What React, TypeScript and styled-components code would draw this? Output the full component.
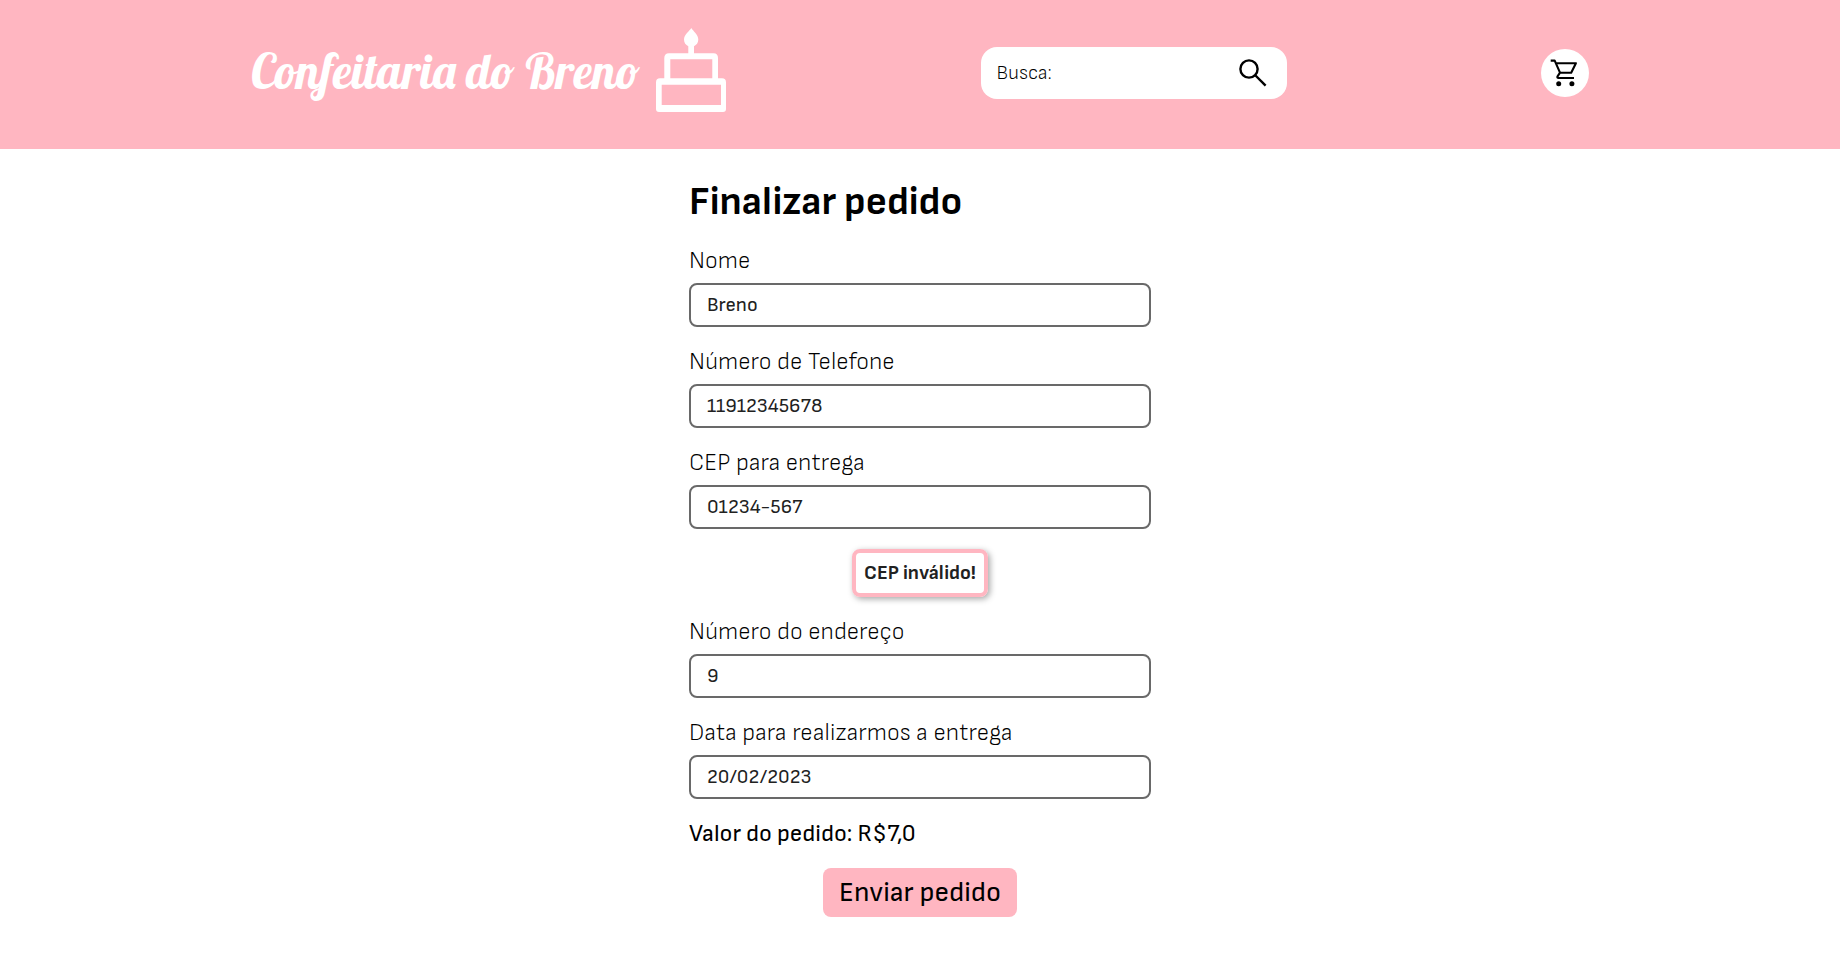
import React, { useState } from "react";
import styled, { createGlobalStyle } from "styled-components";

const pink = "#ffb6c1";

const GlobalStyle = createGlobalStyle`
  *, *::before, *::after { box-sizing: border-box; }
  body {
    margin: 0;
    background: #fff;
    color: #000;
    font-family: "Sofia Sans", Roboto, "Liberation Sans", sans-serif;
  }
  input, button { font-family: inherit; }
`;

const Header = styled.header`
  display: flex;
  flex-wrap: wrap;
  align-items: center;
  justify-content: space-evenly;
  gap: 16px 3px;
  padding: 28px 0 31px;
  background: ${pink};
`;

const Logo = styled.a`
  display: flex;
  align-items: flex-start;
  justify-content: space-between;
  width: 475px;
  max-width: 100%;
  height: 90px;
  color: #fff;
  text-decoration: none;
`;

const LogoText = styled.span`
  font-family: Lobster, "Liberation Serif", serif;
  font-size: 48px;
  font-weight: 400;
  line-height: 86px;
  white-space: nowrap;
`;

const Search = styled.form`
  display: flex;
  align-items: center;
  width: 306px;
  height: 52px;
  padding: 0 16px;
  border-radius: 16px;
  background: #fff;
`;

const SearchInput = styled.input`
  flex: 1;
  min-width: 0;
  padding: 0;
  border: 0;
  outline: 0;
  background: transparent;
  font-size: 20px;
  font-weight: 300;
  &::placeholder { color: #000; opacity: 1; }
`;

const IconButton = styled.button`
  display: flex;
  align-items: center;
  justify-content: center;
  width: 36px;
  height: 36px;
  padding: 0;
  border: 0;
  background: transparent;
  cursor: pointer;
`;

const CartButton = styled(IconButton)`
  width: 48px;
  height: 48px;
  border-radius: 50%;
  background: #fff;
`;

const OrderForm = styled.form`
  display: flex;
  flex-direction: column;
  gap: 20px;
  width: 462px;
  max-width: 100%;
  margin: 0 auto;
  padding: 29px 0 48px;
`;

const Title = styled.h1`
  margin: 0;
  font-size: 40px;
  font-weight: 700;
  line-height: 48px;
`;

const Field = styled.div`
  display: flex;
  flex-direction: column;
  gap: 8px;
`;

const Label = styled.label`
  font-size: 24px;
  font-weight: 300;
  line-height: 29px;
`;

const TextInput = styled.input`
  width: 100%;
  height: 44px;
  padding: 0 16px;
  border: 2px solid #696969;
  border-radius: 8px;
  background: #fff;
  color: #212121;
  font-size: 20px;
  font-weight: 400;
`;

const Alert = styled.p`
  align-self: center;
  margin: 0;
  padding: 0 8px;
  border: 4px solid ${pink};
  border-radius: 8px;
  box-shadow: 2px 2px 6px rgba(0, 0, 0, 0.35);
  color: #212121;
  font-size: 20px;
  font-weight: 700;
  line-height: 40px;
`;

const Total = styled.p`
  margin: 0;
  font-size: 24px;
  font-weight: 400;
  line-height: 29px;
`;

const Submit = styled.button`
  align-self: center;
  height: 49px;
  padding: 0 16px;
  border: 0;
  border-radius: 8px;
  background: ${pink};
  color: #000;
  font-size: 28px;
  font-weight: 400;
  cursor: pointer;
`;

const CakeIcon = () => (
  <svg width="70" height="84" viewBox="0 0 70 84" fill="#fff" aria-hidden="true">
    <path d="M35.3 0C37 3 42.3 6.5 42.3 11.5C42.3 14.8 40.5 17 38 18.2V26H32.3V18.2C29.8 17 28 14.8 28 11.5C28 6.5 33.6 3 35.3 0Z" />
    <path
      fillRule="evenodd"
      d="M13 25.3H57.5Q62 25.3 62 30V50.3H66Q70 50.3 70 54.5V81Q70 84 67 84H3Q0 84 0 81V54.5Q0 50.3 4 50.3H8.3V30Q8.3 25.3 13 25.3ZM14.3 31.3V50.3H56.3V31.3ZM5.7 56.7V77H65V56.7Z"
    />
  </svg>
);

const SearchIcon = () => (
  <svg width="28" height="28" viewBox="0 0 28 28" fill="none" stroke="#000" strokeWidth="2.4" aria-hidden="true">
    <circle cx="10" cy="10" r="8.6" />
    <path d="M16 16L26.6 26.6" />
  </svg>
);

const CartIcon = () => (
  <svg width="32" height="32" viewBox="0 0 32 32" fill="none" stroke="#000" strokeWidth="2.1" aria-hidden="true">
    <path d="M1.7 3.6H5.7L11 15.7H22.2L26.9 6.2H7M11 15.7L8.4 19.6Q8.1 21 9.4 21H25" strokeLinejoin="round" />
    <circle cx="9.7" cy="26.7" r="2.5" fill="#000" stroke="none" />
    <circle cx="22.9" cy="26.7" r="2.5" fill="#000" stroke="none" />
  </svg>
);

interface FieldData {
  id: string;
  label: string;
  value: string;
  error?: string;
}

const initialFields: FieldData[] = [
  { id: "nome", label: "Nome", value: "Breno" },
  { id: "telefone", label: "Número de Telefone", value: "11912345678" },
  { id: "cep", label: "CEP para entrega", value: "01234-567", error: "CEP inválido!" },
  { id: "numero", label: "Número do endereço", value: "9" },
  { id: "data", label: "Data para realizarmos a entrega", value: "20/02/2023" },
];

export default function App() {
  const [fields, setFields] = useState(initialFields);
  const update = (id: string, value: string) =>
    setFields((all) => all.map((f) => (f.id === id ? { ...f, value } : f)));

  return (
    <>
      <GlobalStyle />
      <Header>
        <Logo href="#">
          <LogoText>Confeitaria do Breno</LogoText>
          <CakeIcon />
        </Logo>
        <Search role="search" onSubmit={(e) => e.preventDefault()}>
          <SearchInput type="text" aria-label="Busca" placeholder="Busca:" />
          <IconButton type="submit" aria-label="Buscar">
            <SearchIcon />
          </IconButton>
        </Search>
        <CartButton type="button" aria-label="Carrinho">
          <CartIcon />
        </CartButton>
      </Header>
      <main>
        <OrderForm onSubmit={(e) => e.preventDefault()}>
          <Title>Finalizar pedido</Title>
          {fields.map((f) => (
            <React.Fragment key={f.id}>
              <Field>
                <Label htmlFor={f.id}>{f.label}</Label>
                <TextInput
                  id={f.id}
                  type="text"
                  value={f.value}
                  onChange={(e) => update(f.id, e.target.value)}
                />
              </Field>
              {f.error && <Alert role="alert">{f.error}</Alert>}
            </React.Fragment>
          ))}
          <Total>Valor do pedido: R$7,0</Total>
          <Submit type="submit">Enviar pedido</Submit>
        </OrderForm>
      </main>
    </>
  );
}
